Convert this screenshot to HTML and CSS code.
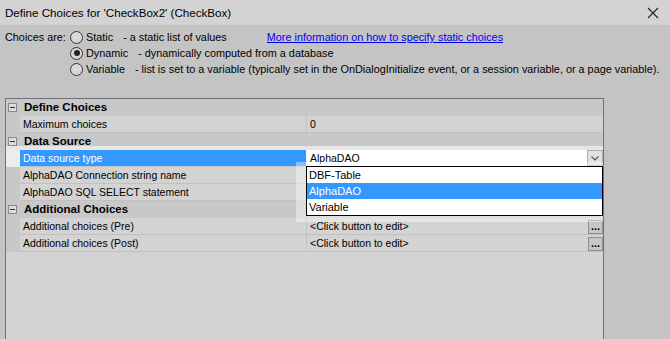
FILE: index.html
```html
<!DOCTYPE html>
<html lang="en-US">
<head>
    <meta charset="UTF-8">
    <title>Define Choices</title>
  <link rel="stylesheet" href="styles.css">
</head>
<body>

<div class=titlebar>
  <span>Define Choices for 'CheckBox2' (CheckBox)</span>
  <svg class=close width=12 height=12 viewBox="0 0 12 12">
    <path d="M1 1L11 11M11 1L1 11" stroke="#222" stroke-width="1.1" fill="none"/>
  </svg>
</div>

<div class=choices>
  <label class=lead>Choices are:</label>
  <div class=options>
    <div class=opt>
      <span class=radio></span><span class=name>Static</span>
      <span class=desc>- a static list of values</span>
      <a class=more href="#">More information on how to specify static choices</a>
    </div>
    <div class=opt>
      <span class="radio on"></span><span class=name>Dynamic</span>
      <span class=desc>- dynamically computed from a database</span>
    </div>
    <div class=opt>
      <span class=radio></span><span class=name>Variable</span>
      <span class=desc>- list is set to a variable (typically set in the OnDialogInitialize event, or a session variable, or a page variable).</span>
    </div>
  </div>
</div>

<div class=grid>
  <div class=cat><span class=minus></span>Define Choices</div>
  <div class=row><span class=gut></span><span class=key>Maximum choices</span><span class=val>0</span></div>
  <div class=cat><span class=minus></span>Data Source</div>
  <div class="row sel">
    <span class=gut></span><span class=key>Data source type</span>
    <span class=val>AlphaDAO
      <span class=drop><svg width=8 height=5 viewBox="0 0 8 5"><path d="M0.5 0.5L4 4L7.5 0.5" stroke="#555" stroke-width="1.2" fill="none"/></svg></span>
    </span>
    <div class=popup>
      <div class=item>DBF-Table</div>
      <div class="item hi">AlphaDAO</div>
      <div class=item>Variable</div>
    </div>
  </div>
  <div class=row><span class=gut></span><span class=key>AlphaDAO Connection string name</span><span class=val></span></div>
  <div class=row><span class=gut></span><span class=key>AlphaDAO SQL SELECT statement</span><span class=val></span></div>
  <div class=cat><span class=minus></span>Additional Choices</div>
  <div class=row><span class=gut></span><span class=key>Additional choices (Pre)</span><span class=val>&lt;Click button to edit&gt;<span class=dots>...</span></span></div>
  <div class=row><span class=gut></span><span class=key>Additional choices (Post)</span><span class=val>&lt;Click button to edit&gt;<span class=dots>...</span></span></div>
</div>

</body>
</html>
```

FILE: styles.css
```css
html, body {
  margin: 0;
  height: 339px;
  overflow: hidden;
}
body {
  background: #c4c4c4;
  font: 10.85px "Liberation Sans", Arial, sans-serif;
  color: #000;
}
.titlebar {
  height: 25px;
  background: #d3d3d3;
  display: flex;
  align-items: center;
  justify-content: space-between;
  padding: 0 11px 0 5px;
  font-size: 11.6px;
}
.close { display: block; }

.choices {
  display: flex;
  padding: 4px 0 0 5px;
  height: 73px;
  box-sizing: border-box;
  white-space: nowrap;
}
.lead { width: 65px; flex-shrink: 0; line-height: 16px; }
.opt {
  display: flex;
  align-items: center;
  height: 16px;
}
.radio {
  width: 11px; height: 11px;
  border: 1px solid #333;
  border-radius: 50%;
  background: #d8d8d8;
  margin-right: 3px;
  position: relative;
}
.radio.on::after {
  content: '';
  position: absolute;
  left: 2.5px; top: 2.5px;
  width: 6px; height: 6px;
  border-radius: 50%;
  background: #222;
}
.desc { margin-left: 10px; }
.more {
  margin-left: 40px;
  color: #0000ee;
}

.grid {
  margin-left: 5px;
  width: 597px;
  height: 241px;
  border: 1px solid #6f7379;
  border-bottom: 0;
  background: #d3d3d3;
  font-size: 10.5px;
}
.cat, .row {
  height: 16px;
  border-bottom: 1px solid #c1c1c1;
  display: flex;
  align-items: center;
}
.cat {
  background: #c8c8c8;
  font-weight: bold;
  font-size: 11.5px;
  border-bottom-color: #c8c8c8;
}
.minus {
  width: 7px; height: 7px;
  border: 1px solid #8a8a8a;
  background: #dcdcdc;
  margin: 0 7px 0 2px;
  position: relative;
}
.minus::after {
  content: '';
  position: absolute;
  left: 1px; top: 3px;
  width: 5px; height: 1px;
  background: #333;
}
.row { position: relative; }
.gut {
  width: 14px;
  align-self: stretch;
  background: #c8c8c8;
  margin-bottom: -1px;
}
.key {
  width: 283px;
  padding-left: 3px;
  align-self: stretch;
  display: flex;
  align-items: center;
  border-right: 1px solid #c1c1c1;
}
.val {
  flex: 1;
  padding-left: 3px;
  align-self: stretch;
  display: flex;
  align-items: center;
  justify-content: space-between;
}
.sel { box-shadow: 0 -4px 0 rgba(255,255,255,.55); }
.sel .gut { background: #ececec; }
.sel .key { background: #3399ff; color: #fff; border-right-color: #fff; }
.sel .val { background: #fff; }
.drop {
  width: 14px; height: 14px;
  border: 1px solid #adadad;
  background: #e1e1e1;
  display: flex;
  align-items: center;
  justify-content: center;
}
.dots {
  width: 13px; height: 12px;
  border: 1px solid #8e8e8e;
  background: #c6c6c6;
  font-weight: bold;
  font-size: 11px;
  line-height: 11px;
  text-align: center;
  margin: 1px 0 0;
}
.popup {
  position: absolute;
  left: 300px;
  top: 16px;
  width: 295px;
  border: 1px solid #000;
  background: #fff;
  z-index: 2;
  box-shadow: -5px 1px 0 5px rgba(255,255,255,.4);
}
.item {
  height: 16px;
  line-height: 16px;
  padding-left: 2px;
  font-size: 11px;
}
.item.hi { background: #3399ff; color: #fff; }
```
